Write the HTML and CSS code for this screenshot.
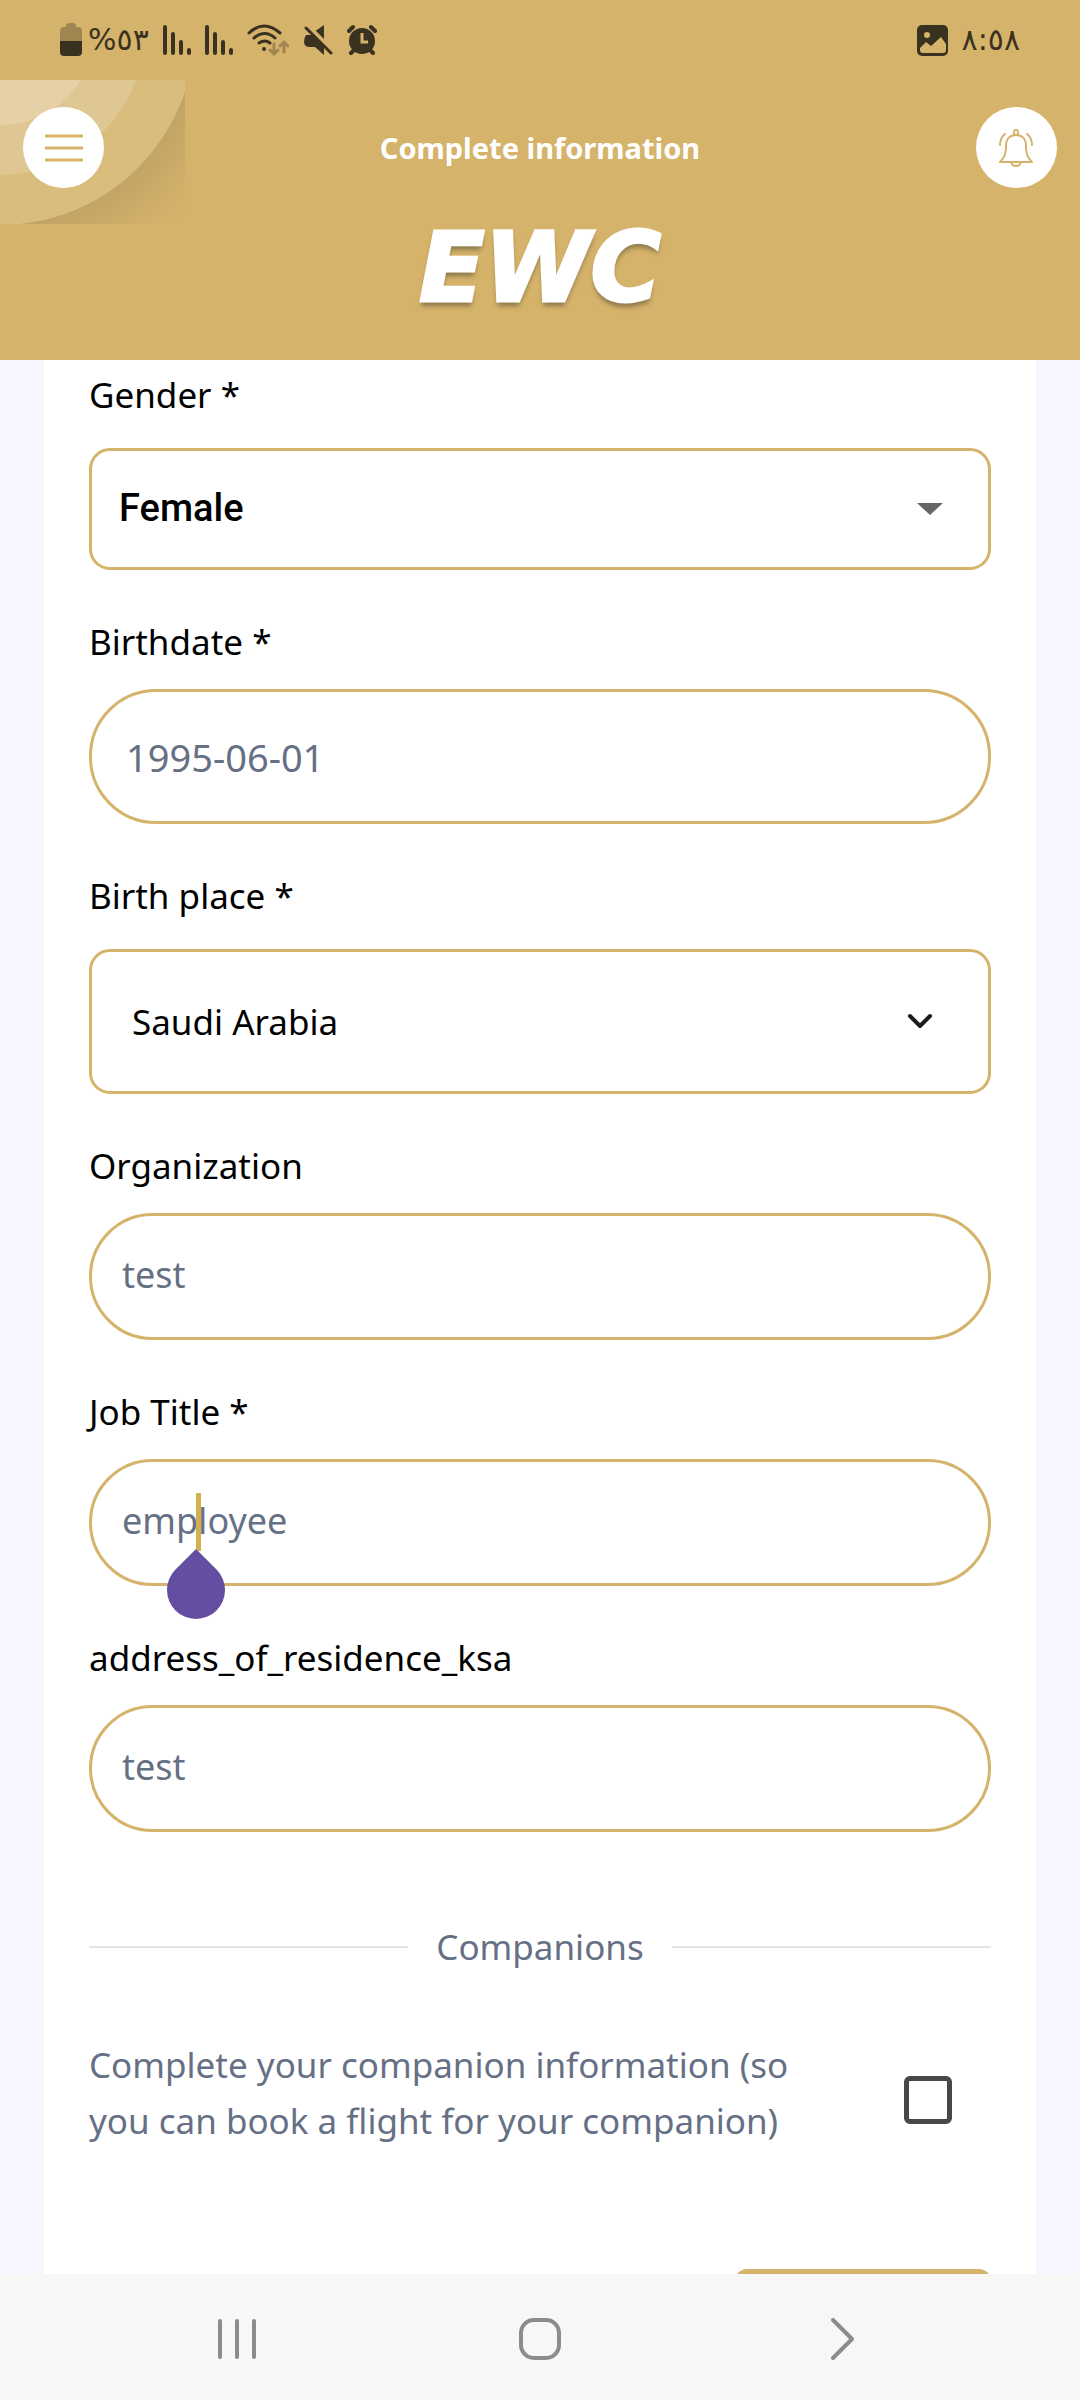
FILE: index.html
```html
<!DOCTYPE html>
<html lang="en">
<head>
    <meta charset="UTF-8">
    <meta name="viewport" content="width=device-width, initial-scale=1.0">
    <title>Complete information</title>
    <link rel="stylesheet" href="styles.css">
</head>
<body>

    <div class="status-bar">
        <div class="status-group">
            <svg class="battery" width="22" height="34" viewBox="0 0 22 34">
                <path fill="#9f8650" d="M6 3q0-3 3-3h4q3 0 3 3v1h2q4 0 4 5v9H0V9q0-5 4-5h2z"/>
                <path fill="#393221" d="M0 18h22v11q0 4-4 4H4q-4 0-4-4z"/>
            </svg>
            <span class="status-text">%٥٣</span>
            <svg class="signal" width="28" height="30" viewBox="0 0 28 30"><path d="M2 2v26M10 9v19M18 17v11M26 25v3"/></svg>
            <svg class="signal" width="28" height="30" viewBox="0 0 28 30"><path d="M2 2v26M10 9v19M18 17v11M26 25v3"/></svg>
            <svg width="42" height="34" viewBox="0 0 42 34" fill="none" stroke-linecap="round">
                <path stroke="#393221" stroke-width="3" d="M2 10q15-14 31 0M7 15q11-9 21 0M12 20q6-4 11 0"/>
                <circle cx="17" cy="26" r="2" fill="#393221"/>
                <path stroke="#9f8650" stroke-width="3" d="M27 21v10M23 27l4 4 4-4M37 29V19M33 23l4-4 4 4"/>
            </svg>
            <svg width="30" height="32" viewBox="0 0 30 32">
                <path fill="#393221" d="M11 8L21 1v17zM3 11h6l12 12v8l-9-8H7q-6 0-6-5 0-4 2-7z"/>
                <path stroke="#d6b36a" stroke-width="3" d="M6 2l25 25"/>
                <path stroke="#393221" stroke-width="3" stroke-linecap="round" d="M3 4l25 25"/>
            </svg>
            <svg width="30" height="32" viewBox="0 0 30 32">
                <circle cx="15" cy="17" r="13" fill="#393221"/>
                <path stroke="#393221" stroke-width="4" stroke-linecap="round" d="M2 7l4-4M28 7l-4-4M4 29l4-4M26 29l-4-4"/>
                <path fill="none" stroke="#d6b36a" stroke-width="3" d="M15 9v9h6"/>
            </svg>
        </div>
        <div class="status-group">
            <svg width="31" height="31" viewBox="0 0 31 31">
                <rect width="31" height="31" rx="5" fill="#393221"/>
                <circle cx="10" cy="10" r="3" fill="#d6b36a"/>
                <path fill="#d6b36a" d="M3 23l6-6 5 4 10-9 5 7v6q0 3-3 3H6q-3 0-3-3z"/>
            </svg>
            <span class="status-text">٨:٥٨</span>
        </div>
    </div>

    <header class="header">
        <svg class="header-rings" width="185" height="144" viewBox="0 0 185 144">
            <defs>
                <radialGradient id="ringShadow" gradientUnits="userSpaceOnUse" cx="0" cy="-50" r="260">
                    <stop offset="0.75" stop-color="#c2a465"/>
                    <stop offset="0.92" stop-color="#d2b06a"/>
                    <stop offset="1" stop-color="#d6b36a"/>
                </radialGradient>
            </defs>
            <rect width="185" height="144" fill="url(#ringShadow)"/>
            <circle cx="0" cy="-50" r="195" fill="#d9bd7c"/>
            <circle cx="0" cy="-50" r="145" fill="#dfc793"/>
            <circle cx="0" cy="-50" r="95" fill="#e6d1a7"/>
        </svg>
        <div class="header-row">
            <button class="round-button" type="button" aria-label="Menu">
                <svg width="38" height="30" viewBox="0 0 38 30"><path stroke="#d6b36a" stroke-width="3" d="M0 3h38M0 15h38M0 27h38"/></svg>
            </button>
            <h1>Complete information</h1>
            <button class="round-button" type="button" aria-label="Notifications">
                <svg width="36" height="40" viewBox="0 0 36 40" fill="none" stroke="#d6b36a" stroke-width="2" stroke-linecap="round" stroke-linejoin="round">
                    <path d="M2 34h32c-5-5-6-9-6-16 0-7-4-11-10-11S8 11 8 18c0 7-1 11-6 16z"/>
                    <path d="M16 7V4q0-2 2-2t2 2v3M13 34q1 4 5 4t5-4M7 6q-5 4-5 11M29 6q5 4 5 11"/>
                </svg>
            </button>
        </div>
        <div class="logo">EWC</div>
    </header>

    <main class="content">
        <form class="card">
            <div class="field">
                <label for="gender">Gender *</label>
                <div class="control">
                    <select id="gender" class="gender">
                        <option>Female</option>
                        <option>Male</option>
                    </select>
                    <svg class="arrow" width="26" height="12" viewBox="0 0 26 12"><path fill="#666" d="M0 0h26L13 12z"/></svg>
                </div>
            </div>
            <div class="field">
                <label for="birthdate">Birthdate *</label>
                <div class="control">
                    <input type="text" id="birthdate" class="birthdate" value="1995-06-01">
                </div>
            </div>
            <div class="field">
                <label for="birthplace">Birth place *</label>
                <div class="control">
                    <select id="birthplace" class="birthplace">
                        <option>Saudi Arabia</option>
                    </select>
                    <svg class="chevron" width="26" height="16" viewBox="0 0 26 16"><path fill="none" stroke="#1d1b20" stroke-width="4" stroke-linecap="round" stroke-linejoin="round" d="M3 3l10 10L23 3"/></svg>
                </div>
            </div>
            <div class="field">
                <label for="organization">Organization</label>
                <div class="control">
                    <input type="text" id="organization" value="test">
                </div>
            </div>
            <div class="field">
                <label for="job">Job Title *</label>
                <div class="control">
                    <input type="text" id="job" value="employee">
                    <span class="caret"></span>
                    <svg class="caret-handle" width="58" height="70" viewBox="0 0 58 70"><path fill="#644ea2" d="M29 0l21 21a29 29 0 1 1-42 0z"/></svg>
                </div>
            </div>
            <div class="field">
                <label for="address">address_of_residence_ksa</label>
                <div class="control">
                    <input type="text" id="address" value="test">
                </div>
            </div>

            <div class="divider"><span>Companions</span></div>

            <div class="companion">
                <label for="companion">Complete your companion information (so you can book a flight for your companion)</label>
                <input type="checkbox" id="companion">
            </div>

            <button class="submit" type="button" aria-label="Next"></button>
        </form>
    </main>

    <nav class="nav-bar">
        <button type="button" aria-label="Recent apps">
            <svg width="40" height="42" viewBox="0 0 40 42"><path d="M3 3v36M20 3v36M37 3v36"/></svg>
        </button>
        <button type="button" aria-label="Home">
            <svg width="42" height="42" viewBox="0 0 42 42"><rect x="2" y="2" width="38" height="38" rx="13"/></svg>
        </button>
        <button type="button" aria-label="Back">
            <svg width="24" height="42" viewBox="0 0 24 42"><path d="M2 2l19 19L2 40"/></svg>
        </button>
    </nav>

</body>
</html>
```
FILE: styles.css
```css
* {
    box-sizing: border-box;
}
body {
    font-family: "Noto Sans", sans-serif;
    font-size: 35px;
    margin: 0;
    background-color: #f7f6ff;
    color: #000000;
    display: flex;
    flex-direction: column;
    height: 100vh;
}
button {
    border: none;
    padding: 0;
    cursor: pointer;
}
.status-bar {
    display: flex;
    justify-content: space-between;
    align-items: center;
    height: 80px;
    padding: 0 60px;
    background-color: #d6b36a;
    color: #393221;
}
.status-group {
    display: flex;
    align-items: center;
    gap: 14px;
}
.battery {
    margin-right: -8px;
}
.status-text {
    font-family: "DejaVu Sans", sans-serif;
    font-size: 30px;
    line-height: 40px;
}
.signal {
    fill: none;
    stroke: #393221;
    stroke-width: 4px;
    stroke-linecap: round;
}
.header {
    position: relative;
    height: 280px;
    background-color: #d6b36a;
    color: #ffffff;
}
.header-rings {
    position: absolute;
    top: 0;
    left: 0;
}
.header-row {
    position: relative;
    display: flex;
    justify-content: space-between;
    align-items: center;
    padding: 27px 23px 0;
}
.header h1 {
    font-size: 29px;
    line-height: 48px;
    margin: 0;
}
.round-button {
    display: flex;
    align-items: center;
    justify-content: center;
    width: 81px;
    height: 81px;
    border-radius: 50%;
    background-color: #ffffff;
}
.logo {
    margin-top: 32px;
    text-align: center;
    font-family: "DejaVu Sans", sans-serif;
    font-size: 96px;
    font-weight: bold;
    font-style: italic;
    line-height: 96px;
    -webkit-text-stroke: 3px #ffffff;
    text-shadow: 0 5px 5px #8a774c;
}
.content {
    flex: 1;
    min-height: 0;
    overflow: hidden;
    padding: 0 44px;
}
.card {
    display: flex;
    flex-direction: column;
    gap: 46px;
    padding: 9px 45px 46px;
    background-color: #ffffff;
}
.field {
    display: flex;
    flex-direction: column;
    gap: 21px;
}
.field:has(select) {
    gap: 27px;
}
.field label {
    line-height: 52px;
}
.control {
    position: relative;
    display: flex;
}
.control input,
.control select {
    appearance: none;
    width: 100%;
    height: 127px;
    padding: 0 30px 4px;
    border: 3px solid #d6b36a;
    border-radius: 67px;
    background-color: #ffffff;
    color: #667085;
    font: inherit;
    font-size: 36px;
}
.control select {
    border-radius: 21px;
    color: #000000;
}
.control .gender {
    height: 122px;
    padding: 0 27px 2px;
    font-family: Roboto, sans-serif;
    font-size: 38px;
    font-weight: 500;
}
.control .birthdate {
    height: 135px;
    padding: 0 34px;
    font-size: 38px;
}
.control .birthplace {
    height: 145px;
    padding: 0 40px;
    font-size: 35px;
}
.arrow {
    position: absolute;
    right: 48px;
    top: 55px;
    pointer-events: none;
}
.chevron {
    position: absolute;
    right: 58px;
    top: 64px;
    pointer-events: none;
}
.caret {
    position: absolute;
    left: 107px;
    top: 34px;
    width: 5px;
    height: 58px;
    background-color: #d0b04f;
}
.caret-handle {
    position: absolute;
    left: 78px;
    top: 90px;
}
.divider {
    display: flex;
    align-items: center;
    gap: 28px;
    margin-top: 41px;
    color: #667085;
    line-height: 56px;
}
.divider::before,
.divider::after {
    content: "";
    flex: 1;
    height: 2px;
    background-color: #e4e4e4;
}
.companion {
    display: flex;
    align-items: center;
    justify-content: space-between;
    margin-top: 16px;
    padding-right: 39px;
    color: #667085;
    line-height: 56px;
}
.companion label {
    width: 720px;
}
.companion input {
    appearance: none;
    width: 48px;
    height: 48px;
    margin: 14px 0 0;
    border: 5px solid #484848;
    border-radius: 6px;
}
.submit {
    align-self: flex-end;
    width: 256px;
    height: 100px;
    margin-top: 74px;
    border-radius: 12px;
    background-color: #d6b36a;
}
.nav-bar {
    display: flex;
    height: 126px;
    padding: 4px 86px 0;
    background-color: #f7f7f7;
}
.nav-bar button {
    display: flex;
    flex: 1;
    align-items: center;
    justify-content: center;
    background: none;
}
.nav-bar svg {
    fill: none;
    stroke: #8c8c8c;
    stroke-width: 4px;
    stroke-linecap: round;
    stroke-linejoin: round;
}
```
